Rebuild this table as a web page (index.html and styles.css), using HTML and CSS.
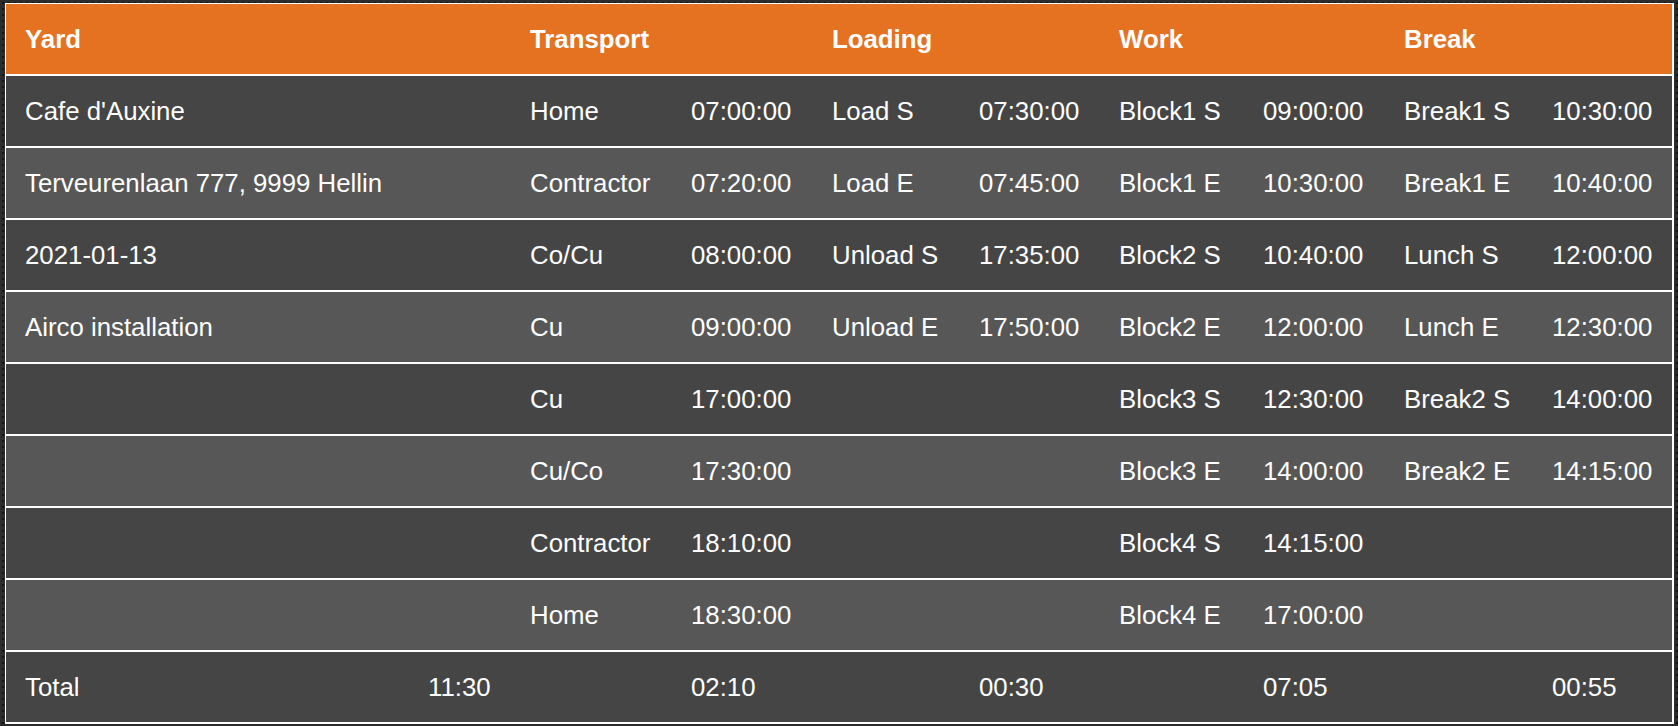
FILE: index.html
```html
<!DOCTYPE html>
<html lang="en">
<head>
<meta charset="utf-8">
<title>Timesheet</title>
<link rel="stylesheet" href="styles.css">
</head>
<body>
<div class="sheet">
  <div class="row head">
    <div class="c span2">Yard</div>
    <div class="c span2">Transport</div>
    <div class="c span2">Loading</div>
    <div class="c span2">Work</div>
    <div class="c span2">Break</div>
  </div>
  <div class="row dark">
    <div class="c span2">Cafe d'Auxine</div>
    <div class="c">Home</div><div class="c">07:00:00</div>
    <div class="c">Load S</div><div class="c">07:30:00</div>
    <div class="c">Block1 S</div><div class="c">09:00:00</div>
    <div class="c">Break1 S</div><div class="c">10:30:00</div>
  </div>
  <div class="row light">
    <div class="c span2">Terveurenlaan 777, 9999 Hellin</div>
    <div class="c">Contractor</div><div class="c">07:20:00</div>
    <div class="c">Load E</div><div class="c">07:45:00</div>
    <div class="c">Block1 E</div><div class="c">10:30:00</div>
    <div class="c">Break1 E</div><div class="c">10:40:00</div>
  </div>
  <div class="row dark">
    <div class="c span2">2021-01-13</div>
    <div class="c">Co/Cu</div><div class="c">08:00:00</div>
    <div class="c">Unload S</div><div class="c">17:35:00</div>
    <div class="c">Block2 S</div><div class="c">10:40:00</div>
    <div class="c">Lunch S</div><div class="c">12:00:00</div>
  </div>
  <div class="row light">
    <div class="c span2">Airco installation</div>
    <div class="c">Cu</div><div class="c">09:00:00</div>
    <div class="c">Unload E</div><div class="c">17:50:00</div>
    <div class="c">Block2 E</div><div class="c">12:00:00</div>
    <div class="c">Lunch E</div><div class="c">12:30:00</div>
  </div>
  <div class="row dark">
    <div class="c span2"></div>
    <div class="c">Cu</div><div class="c">17:00:00</div>
    <div class="c"></div><div class="c"></div>
    <div class="c">Block3 S</div><div class="c">12:30:00</div>
    <div class="c">Break2 S</div><div class="c">14:00:00</div>
  </div>
  <div class="row light">
    <div class="c span2"></div>
    <div class="c">Cu/Co</div><div class="c">17:30:00</div>
    <div class="c"></div><div class="c"></div>
    <div class="c">Block3 E</div><div class="c">14:00:00</div>
    <div class="c">Break2 E</div><div class="c">14:15:00</div>
  </div>
  <div class="row dark">
    <div class="c span2"></div>
    <div class="c">Contractor</div><div class="c">18:10:00</div>
    <div class="c"></div><div class="c"></div>
    <div class="c">Block4 S</div><div class="c">14:15:00</div>
    <div class="c"></div><div class="c"></div>
  </div>
  <div class="row light">
    <div class="c span2"></div>
    <div class="c">Home</div><div class="c">18:30:00</div>
    <div class="c"></div><div class="c"></div>
    <div class="c">Block4 E</div><div class="c">17:00:00</div>
    <div class="c"></div><div class="c"></div>
  </div>
  <div class="row dark">
    <div class="c">Total</div><div class="c">11:30</div>
    <div class="c"></div><div class="c">02:10</div>
    <div class="c"></div><div class="c">00:30</div>
    <div class="c"></div><div class="c">07:05</div>
    <div class="c"></div><div class="c">00:55</div>
  </div>
</div>
</body>
</html>
```

FILE: styles.css
```css
html, body {
  margin: 0;
  padding: 0;
}
body {
  height: 726px;
  padding: 3px 0 0 5px;
  box-sizing: border-box;
  background-color: #2c2c2c;
  background-image: radial-gradient(circle, #141414 0.9px, transparent 1.4px);
  background-size: 6px 6px;
  font-family: "Liberation Sans", Arial, Helvetica, sans-serif;
  font-size: 25.8px;
  color: #ffffff;
}
.sheet {
  width: 1669px;
  box-sizing: border-box;
  background: #ffffff;
  padding: 1px 2px 2px 1px;
  display: flex;
  flex-direction: column;
  gap: 2px;
}
.row {
  display: grid;
  grid-template-columns: 403px 102px 161px 141px 147px 140px 144px 141px 148px 139px;
  height: 70px;
  align-items: center;
}
.row.head {
  background: #e47221;
  font-weight: bold;
}
.row.dark {
  background: #454545;
}
.row.light {
  background: #575757;
}
.c {
  padding-left: 19px;
  white-space: nowrap;
  line-height: 30px;
}
.span2 {
  grid-column: span 2;
}
```
